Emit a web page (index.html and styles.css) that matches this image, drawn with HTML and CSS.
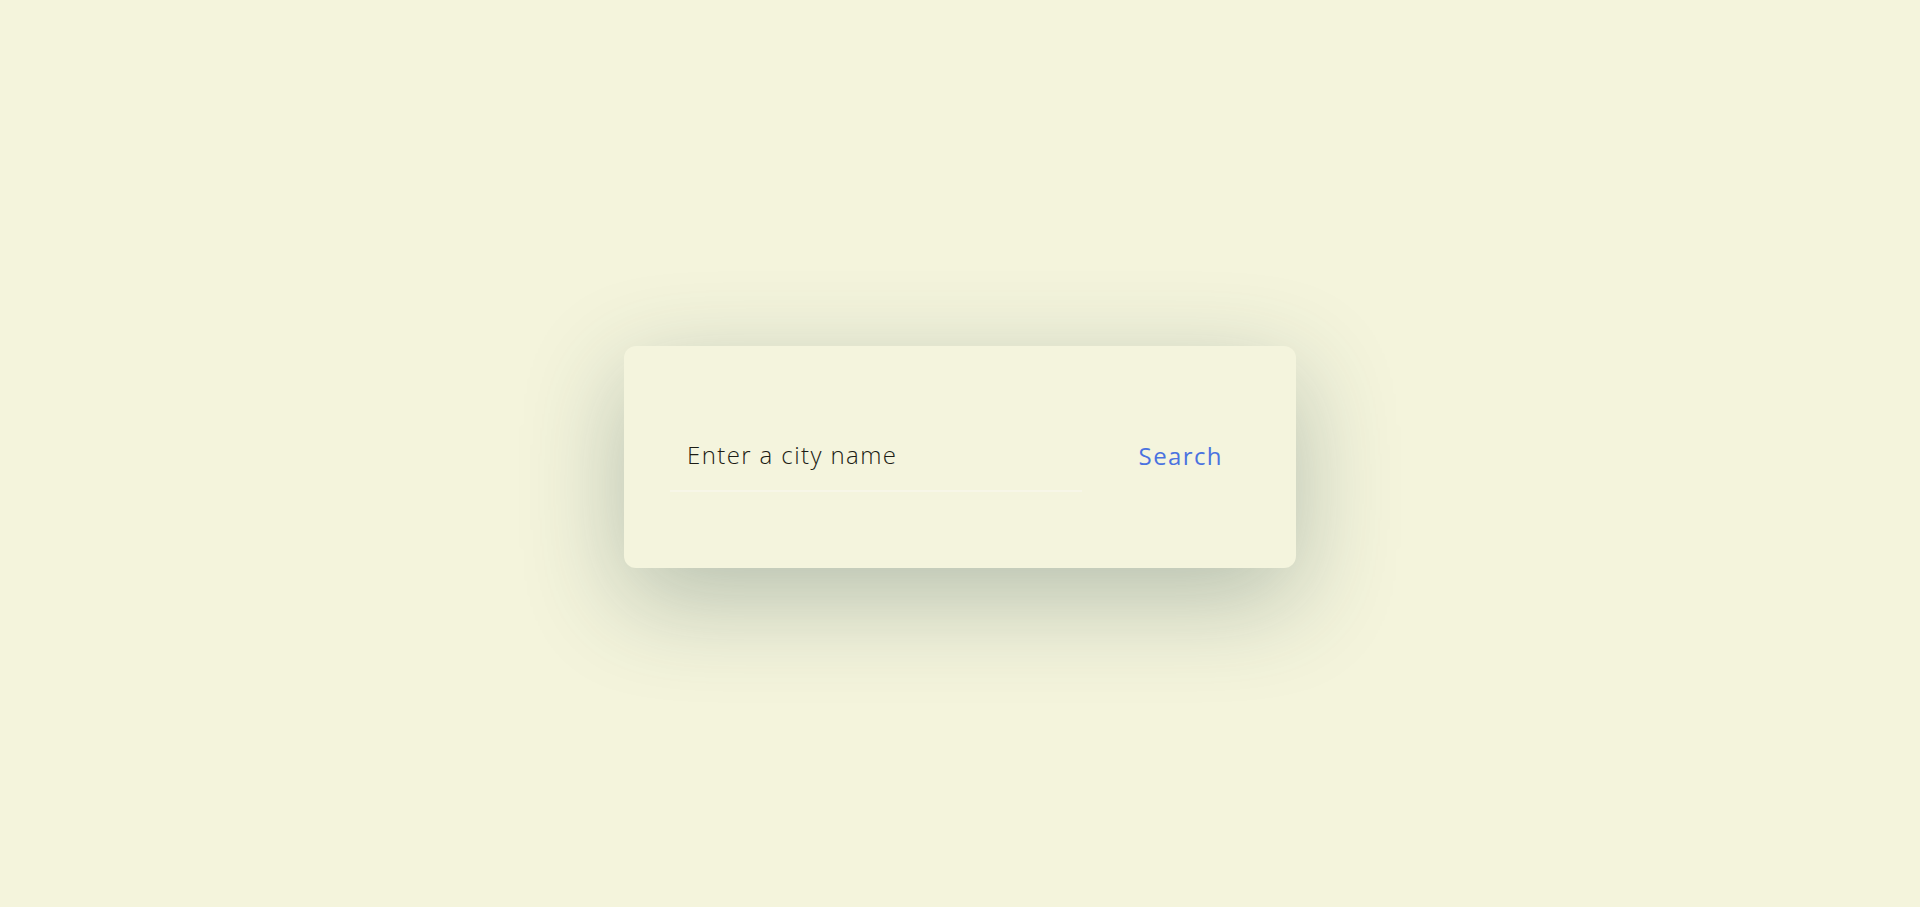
FILE: index.html
```html
<!DOCTYPE html>
<html lang="en">
<head>
<meta charset="utf-8">
<title>Weather</title>
<link rel="stylesheet" href="styles.css">
</head>
<body>
<main class="page">
  <form class="search-card" onsubmit="return false">
    <input class="city-input" type="text" placeholder="Enter a city name">
    <button class="search-btn" type="submit">Search</button>
  </form>
</main>
</body>
</html>
```
FILE: styles.css
```css
* { box-sizing: border-box; }
html, body { margin: 0; padding: 0; }
body {
  background: #f4f4dc;
  font-family: "Open Sans", "Liberation Sans", sans-serif;
}
.page {
  min-height: 100vh;
  padding-top: 7px;
  display: flex;
  align-items: center;
  justify-content: center;
}
.search-card {
  width: 672px;
  height: 222px;
  background: #f4f4dd;
  border-radius: 12px;
  box-shadow: 0 30px 100px rgba(47, 79, 79, 0.32);
  display: flex;
  align-items: center;
  padding: 0 59px 0 46px;
  justify-content: space-between;
}
.city-input {
  width: 412px;
  height: 70px;
  border: none;
  border-bottom: 2px solid #f7f6e7;
  background: transparent;
  padding: 0 16px 4px 17px;
  font-family: "Open Sans", sans-serif;
  font-weight: 300;
  font-size: 24px;
  letter-spacing: 1.4px;
  color: #1c1c14;
  outline: none;
}
.city-input::placeholder { color: #1c1c14; opacity: 1; }
.search-btn {
  border: none;
  background: transparent;
  padding: 6px 14px 10px;
  font-family: "Open Sans", sans-serif;
  font-weight: 500;
  font-size: 24px;
  letter-spacing: 1.4px;
  color: #4a72e0;
  cursor: pointer;
}
```
